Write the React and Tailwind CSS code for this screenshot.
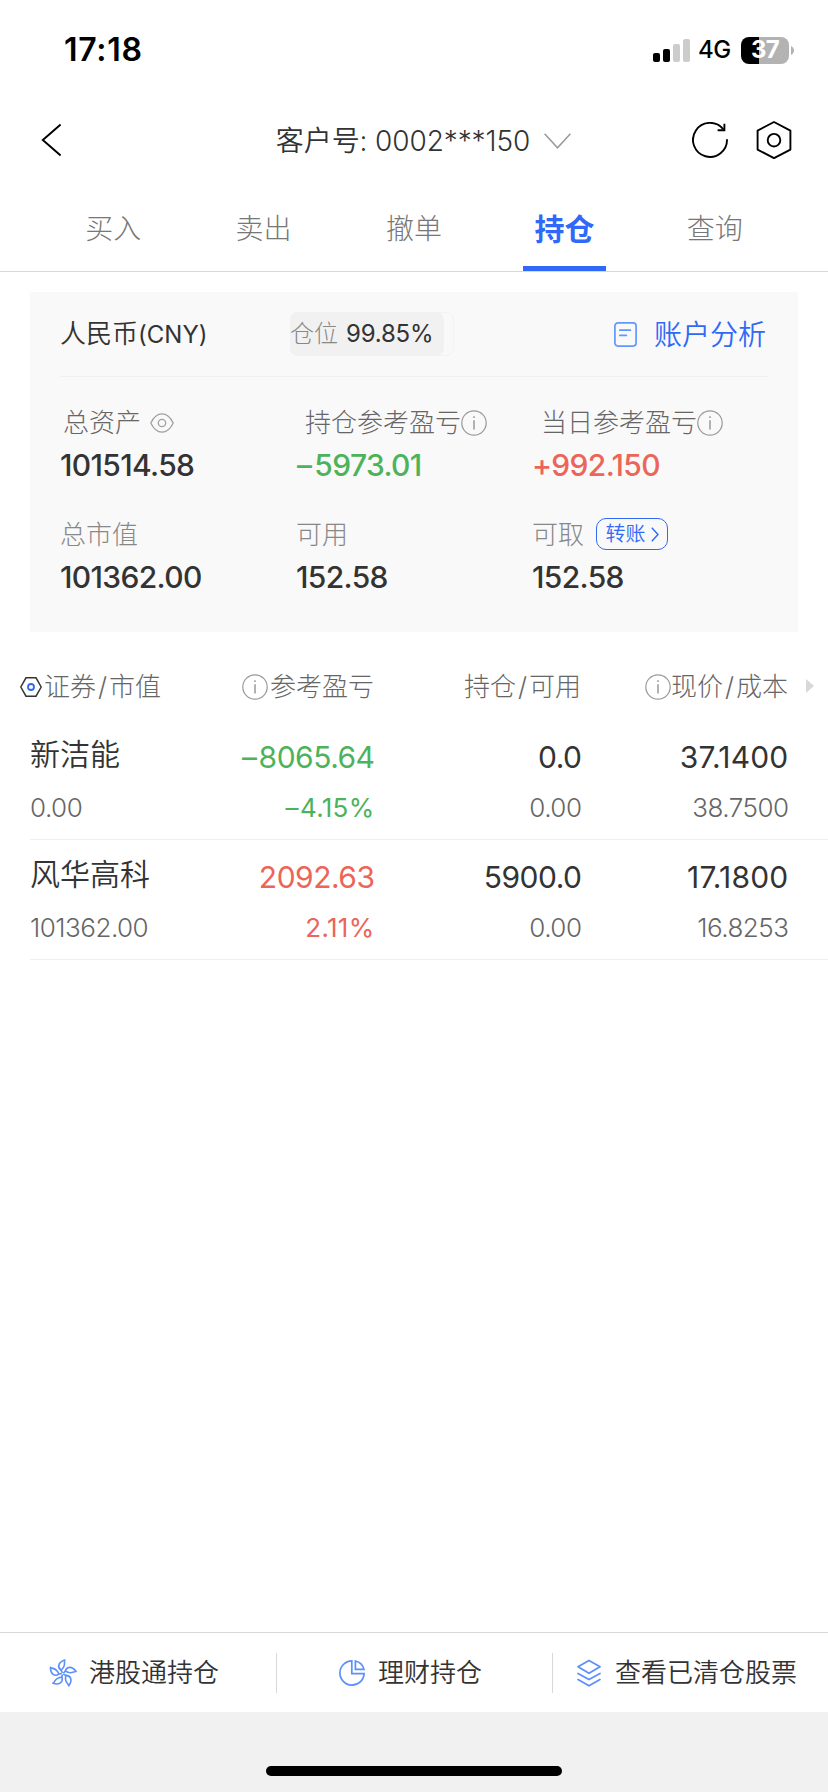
const TABS = ['买入', '卖出', '撤单', '持仓', '查询'];

const HOLDINGS = [
  {
    name: '新洁能',
    value: '0.00',
    sign: '–',
    profit: '8065.64',
    rate: '4.15%',
    color: 'text-[#4db35a]',
    amount: '0.0',
    usable: '0.00',
    price: '37.1400',
    cost: '38.7500',
  },
  {
    name: '风华高科',
    value: '101362.00',
    sign: '',
    profit: '2092.63',
    rate: '2.11%',
    color: 'text-[#ec6558]',
    amount: '5900.0',
    usable: '0.00',
    price: '17.1800',
    cost: '16.8253',
  },
];

function InfoIcon() {
  return (
    <svg className="size-[26px] shrink-0" viewBox="0 0 26 26" fill="none" stroke="#999" strokeWidth="1.2">
      <circle cx="13" cy="13" r="12.2" />
      <path d="M13 10.2V19.6" strokeWidth="1.5" />
      <path d="M13 6.2V8" strokeWidth="1.5" />
    </svg>
  );
}

function EyeIcon() {
  return (
    <svg className="w-6 h-5 shrink-0" viewBox="0 0 24 20" fill="none" stroke="#a0a0a0" strokeWidth="1.3">
      <path d="M0.8 10C3.6 4 7.4 0.8 12 0.8S20.4 4 23.2 10C20.4 16 16.6 19.2 12 19.2S3.6 16 0.8 10Z" />
      <circle cx="12" cy="10" r="3.7" />
    </svg>
  );
}

function FlowerIcon() {
  return (
    <svg className="size-7 shrink-0" viewBox="0 0 28 28" fill="none" stroke="#5b8ff9" strokeWidth="1.6" strokeLinejoin="round">
      {[0, 72, 144, 216, 288].map((deg) => (
        <g key={deg} transform={`rotate(${deg} 13.6 14.6)`}>
          <path d="M12 11.2C8 8.2 9.2 3.2 15.8 1.1C14.6 3.4 17.6 6.8 12 11.2Z" />
          <path d="M12 11L13.4 13.8" />
        </g>
      ))}
    </svg>
  );
}

function PieIcon() {
  return (
    <svg className="size-[26px] shrink-0" viewBox="0 0 26 26" fill="none" stroke="#5b8ff9" strokeWidth="1.7">
      <path d="M12.8 0.9A12.1 12.1 0 1 0 25.1 13.6H12.8Z" />
      <path d="M16.4 1V9.4H25A11.5 11.5 0 0 0 16.4 1Z" />
    </svg>
  );
}

function LayersIcon() {
  return (
    <svg className="w-6 h-7 shrink-0" viewBox="0 0 24 28" fill="none" stroke="#5b8ff9" strokeWidth="1.7" strokeLinejoin="round" strokeLinecap="round">
      <path d="M12 1.4L23 7.8L12 14.3L1 7.8Z" />
      <path d="M1 14.4L12 20.6L23 14.4" />
      <path d="M1 20.6L12 26.8L23 20.6" />
    </svg>
  );
}

function StatusBar() {
  return (
    <div className="h-[100px] pl-[64px] pr-[33px] flex items-center justify-between">
      <span className="text-[32px] tracking-[0.7px] font-semibold text-black leading-none">17:18</span>
      <div className="flex items-center">
        <svg className="w-[37px] h-[23px]" viewBox="0 0 37 23">
          <rect x="0" y="14" width="7" height="9" rx="2" fill="#000" />
          <rect x="10" y="10" width="7" height="13" rx="2" fill="#000" />
          <rect x="20" y="5" width="7" height="18" rx="2" fill="#ccc" />
          <rect x="30" y="0" width="7" height="23" rx="2" fill="#ccc" />
        </svg>
        <span className="ml-2 w-[43px] text-[24px] tracking-[-0.5px] font-medium text-black leading-none">4G</span>
        <div className="w-12 h-[27px] rounded-lg bg-linear-to-r from-black from-[38%] to-[#b3b3b3] to-[38%] text-white text-2xl font-bold tracking-[-0.8px] flex items-center justify-center leading-none">
          37
        </div>
        <svg className="ml-[2px] w-1 h-[9px]" viewBox="0 0 4 9">
          <path d="M0 0C2 1 3 2.6 3 4.5S2 8 0 9Z" fill="#b3b3b3" />
        </svg>
      </div>
    </div>
  );
}

function NavBar() {
  return (
    <div className="h-20 pl-[41px] pr-[36px] flex items-center justify-between">
      <svg className="w-5 h-9" viewBox="0 0 20 36" fill="none" stroke="#000" strokeWidth="1.9">
        <path d="M19.6 2.5L1.8 18L19.6 33.5" />
      </svg>
      <div className="ml-[94px] flex items-center text-[#333]">
        <span className="pt-px text-[28px] font-[350] tracking-[-0.1px] leading-10 whitespace-pre">客户号: 0002***150</span>
        <svg className="ml-[14px] mt-[2px] w-[27px] h-4" viewBox="0 0 27 16" fill="none" stroke="#999" strokeWidth="1.5">
          <path d="M0.6 0.8L13.5 14.8L26.4 0.8" />
        </svg>
      </div>
      <div className="flex items-center gap-7">
        <svg className="size-9" viewBox="0 0 36 36" fill="none" stroke="#000" strokeWidth="1.9">
          <path d="M35 17.2A17 17 0 1 1 31.4 7.4" />
          <path d="M32.4 1.8V8.2H25.6" />
        </svg>
        <svg className="w-9 h-[38px]" viewBox="0 0 36 38" fill="none" stroke="#000" strokeWidth="1.9" strokeLinejoin="round">
          <path d="M18 1L34.4 9.6V28.6L18 37.2L1.6 28.6V9.6Z" />
          <circle cx="18" cy="19.2" r="6.3" />
        </svg>
      </div>
    </div>
  );
}

function Tabs() {
  return (
    <div className="h-[92px] px-[38px] grid grid-cols-5 border-b border-[#d8d8d8]">
      {TABS.map((tab) =>
        tab === '持仓' ? (
          <div key={tab} className="flex flex-col items-center text-[#3069f7] text-[30px] font-bold">
            <span className="h-[86px] leading-[98px]">{tab}</span>
            <span className="w-[83px] h-[5px] bg-[#3069f7]" />
          </div>
        ) : (
          <div key={tab} className="text-center text-[#777] text-[28px] font-light leading-[98px]">
            {tab}
          </div>
        )
      )}
    </div>
  );
}

function Metric({ label, value, valueClass = 'text-[#333]', className = '' }) {
  return (
    <div className={className}>
      <div className="h-10 flex items-center text-[26px] leading-10 whitespace-nowrap">{label}</div>
      <div className={`h-11 text-[30px] leading-11 tracking-[-0.65px] font-medium ${valueClass}`}>{value}</div>
    </div>
  );
}

function AccountCard() {
  return (
    <div className="mx-[30px] mt-5 h-[340px] px-[30px] bg-[#f9f9f9]">
      <div className="h-[85px] grid grid-cols-[230px_1fr_auto] items-center border-b border-[#f0f0f0]">
        <span className="pt-px text-[26px] leading-10 font-[350] text-[#333]">
          人民币<span className="text-[24px] font-normal">(CNY)</span>
        </span>
        <div className="w-[164px] h-11 rounded-lg border border-[#f3f3f3]">
          <div className="-ml-px -mt-px w-[154px] h-11 rounded-lg bg-[#f1f1f1] flex items-center whitespace-nowrap">
            <span className="text-2xl font-light text-[#888]">仓位</span>
            <span className="ml-2 text-2xl tracking-[-0.2px] text-[#333]">99.85%</span>
          </div>
        </div>
        <div className="flex items-center text-[#3069f7]">
          <svg className="w-[23px] h-[25px]" viewBox="0 0 23 25" fill="none" stroke="#6497fb" strokeWidth="1.7" strokeLinecap="round">
            <rect x="0.9" y="0.9" width="21.2" height="23.2" rx="3" />
            <path d="M5.8 8.2H16.4" />
            <path d="M5.8 13.4H12.4" />
          </svg>
          <span className="ml-[17px] mr-[2px] pt-[2px] text-[28px] leading-10 font-[350]">账户分析</span>
        </div>
      </div>

      <div className="grid grid-cols-3">
        <Metric
          className="mt-[26px]"
          label={<><span className="ml-[3px] mr-[9px] font-light text-[#666]">总资产</span><EyeIcon /></>}
          value="101514.58"
        />
        <Metric
          className="mt-[26px]"
          label={<><span className="ml-[9px] font-light text-[#666]">持仓参考盈亏</span><InfoIcon /></>}
          value={<><span className="ml-px mr-[3px]">–</span>5973.01</>}
          valueClass="text-[#4db35a]"
        />
        <Metric
          className="mt-[26px]"
          label={<><span className="ml-[9px] font-light text-[#666]">当日参考盈亏</span><InfoIcon /></>}
          value="+992.150"
          valueClass="text-[#ec6558]"
        />
        <Metric
          className="mt-7"
          label={<span className="font-light text-[#888]">总市值</span>}
          value="101362.00"
        />
        <Metric
          className="mt-7"
          label={<span className="font-light text-[#888]">可用</span>}
          value="152.58"
        />
        <Metric
          className="mt-7"
          label={
            <>
              <span className="font-light text-[#888]">可取</span>
              <span className="ml-3 -mt-[2px] w-[72px] h-8 rounded-[10px] border border-[#3069f7] text-[#3069f7] text-xl leading-none font-[350] flex items-center justify-center gap-[5px]">
                转账
                <svg className="w-2 h-[15px]" viewBox="0 0 8 15" fill="none" stroke="#3069f7" strokeWidth="1.4">
                  <path d="M0.8 0.8L7 7.5L0.8 14.2" />
                </svg>
              </span>
            </>
          }
          value="152.58"
        />
      </div>
    </div>
  );
}

function Slash() {
  return <span className="mx-[2px]">/</span>;
}

function HoldingsTable() {
  return (
    <div>
      <div className="h-[88px] pt-[35px] pl-5 flex items-start text-[26px] leading-10 font-light text-[#666] whitespace-nowrap">
        <div className="w-[147px] h-10 flex items-center">
          <svg className="w-[22px] h-5 mr-[2px] -mt-px shrink-0" viewBox="0 0 22 20" fill="none" strokeWidth="1.5">
            <path d="M6 0.8H16L21.2 10L16 19.2H6L0.8 10Z" stroke="#333" />
            <circle cx="11" cy="10" r="3" stroke="#3069f7" strokeWidth="1.8" />
          </svg>
          证券<Slash />市值
        </div>
        <div className="w-[207px] h-10 flex items-center justify-end"><InfoIcon /><span className="ml-[2px]">参考盈亏</span></div>
        <div className="w-[207px] h-10 flex items-center justify-end">持仓<Slash />可用</div>
        <div className="w-[207px] h-10 flex items-center justify-end"><InfoIcon />现价<Slash />成本</div>
        <svg className="ml-[18px] mt-3 w-2 h-[14px]" viewBox="0 0 8 14">
          <path d="M0 0L8 7L0 14Z" fill="#d8d8d8" />
        </svg>
      </div>

      {HOLDINGS.map((row) => (
        <div key={row.name} className="ml-[30px] h-[120px] grid grid-cols-[137px_207px_207px_207px] border-b border-[#f0f0f0] tracking-[-0.5px] whitespace-nowrap">
          <div>
            <div className="h-[66px] leading-[69px] text-[30px] font-[350] tracking-normal text-[#333]">{row.name}</div>
            <div className="leading-[44px] text-[26px] font-[350] text-[#666]">{row.value}</div>
          </div>
          <div className={`text-right mr-[-0.5px] ${row.color}`}>
            <div className="h-[66px] leading-[74px] text-[30px]">
              {row.sign && <span className="mr-[2px]">{row.sign}</span>}
              {row.profit}
            </div>
            <div className="leading-[44px] text-[26px] tracking-[0.3px]">
              {row.sign && <span className="mr-px">{row.sign}</span>}
              {row.rate}
            </div>
          </div>
          <div className="text-right mr-[-0.5px]">
            <div className="h-[66px] leading-[74px] text-[30px] text-[#333]">{row.amount}</div>
            <div className="leading-[44px] text-[26px] font-[350] text-[#666]">{row.usable}</div>
          </div>
          <div className="text-right mr-[-0.5px]">
            <div className="h-[66px] leading-[74px] text-[30px] tracking-[0.2px] text-[#333]">{row.price}</div>
            <div className="leading-[44px] text-[26px] font-[350] text-[#666]">{row.cost}</div>
          </div>
        </div>
      ))}
    </div>
  );
}

function BottomBar() {
  return (
    <div className="h-20 grid grid-cols-3 items-center border-t border-[#d8d8d8] text-[26px] leading-10 font-[350] text-[#333] whitespace-nowrap">
      <div className="h-10 pl-[49px] flex items-center gap-3">
        <FlowerIcon />
        <span className="pt-px">港股通持仓</span>
      </div>
      <div className="h-10 pl-[62px] flex items-center gap-[13px] border-l border-[#d8d8d8]">
        <PieIcon />
        <span className="pt-px">理财持仓</span>
      </div>
      <div className="h-10 pl-6 flex items-center gap-[14px] border-l border-[#d8d8d8]">
        <LayersIcon />
        <span className="pt-px">查看已清仓股票</span>
      </div>
    </div>
  );
}

export default function App() {
  return (
    <div className="w-[828px] h-[1792px] flex flex-col bg-white overflow-hidden font-['Inter','Noto_Sans_CJK_SC',sans-serif]">
      <StatusBar />
      <NavBar />
      <Tabs />
      <AccountCard />
      <HoldingsTable />
      <div className="flex-1" />
      <BottomBar />
      <div className="h-20 bg-[#f1f1f1] pt-[54px]">
        <div className="mx-auto w-[296px] h-[10px] rounded-full bg-black" />
      </div>
    </div>
  );
}
